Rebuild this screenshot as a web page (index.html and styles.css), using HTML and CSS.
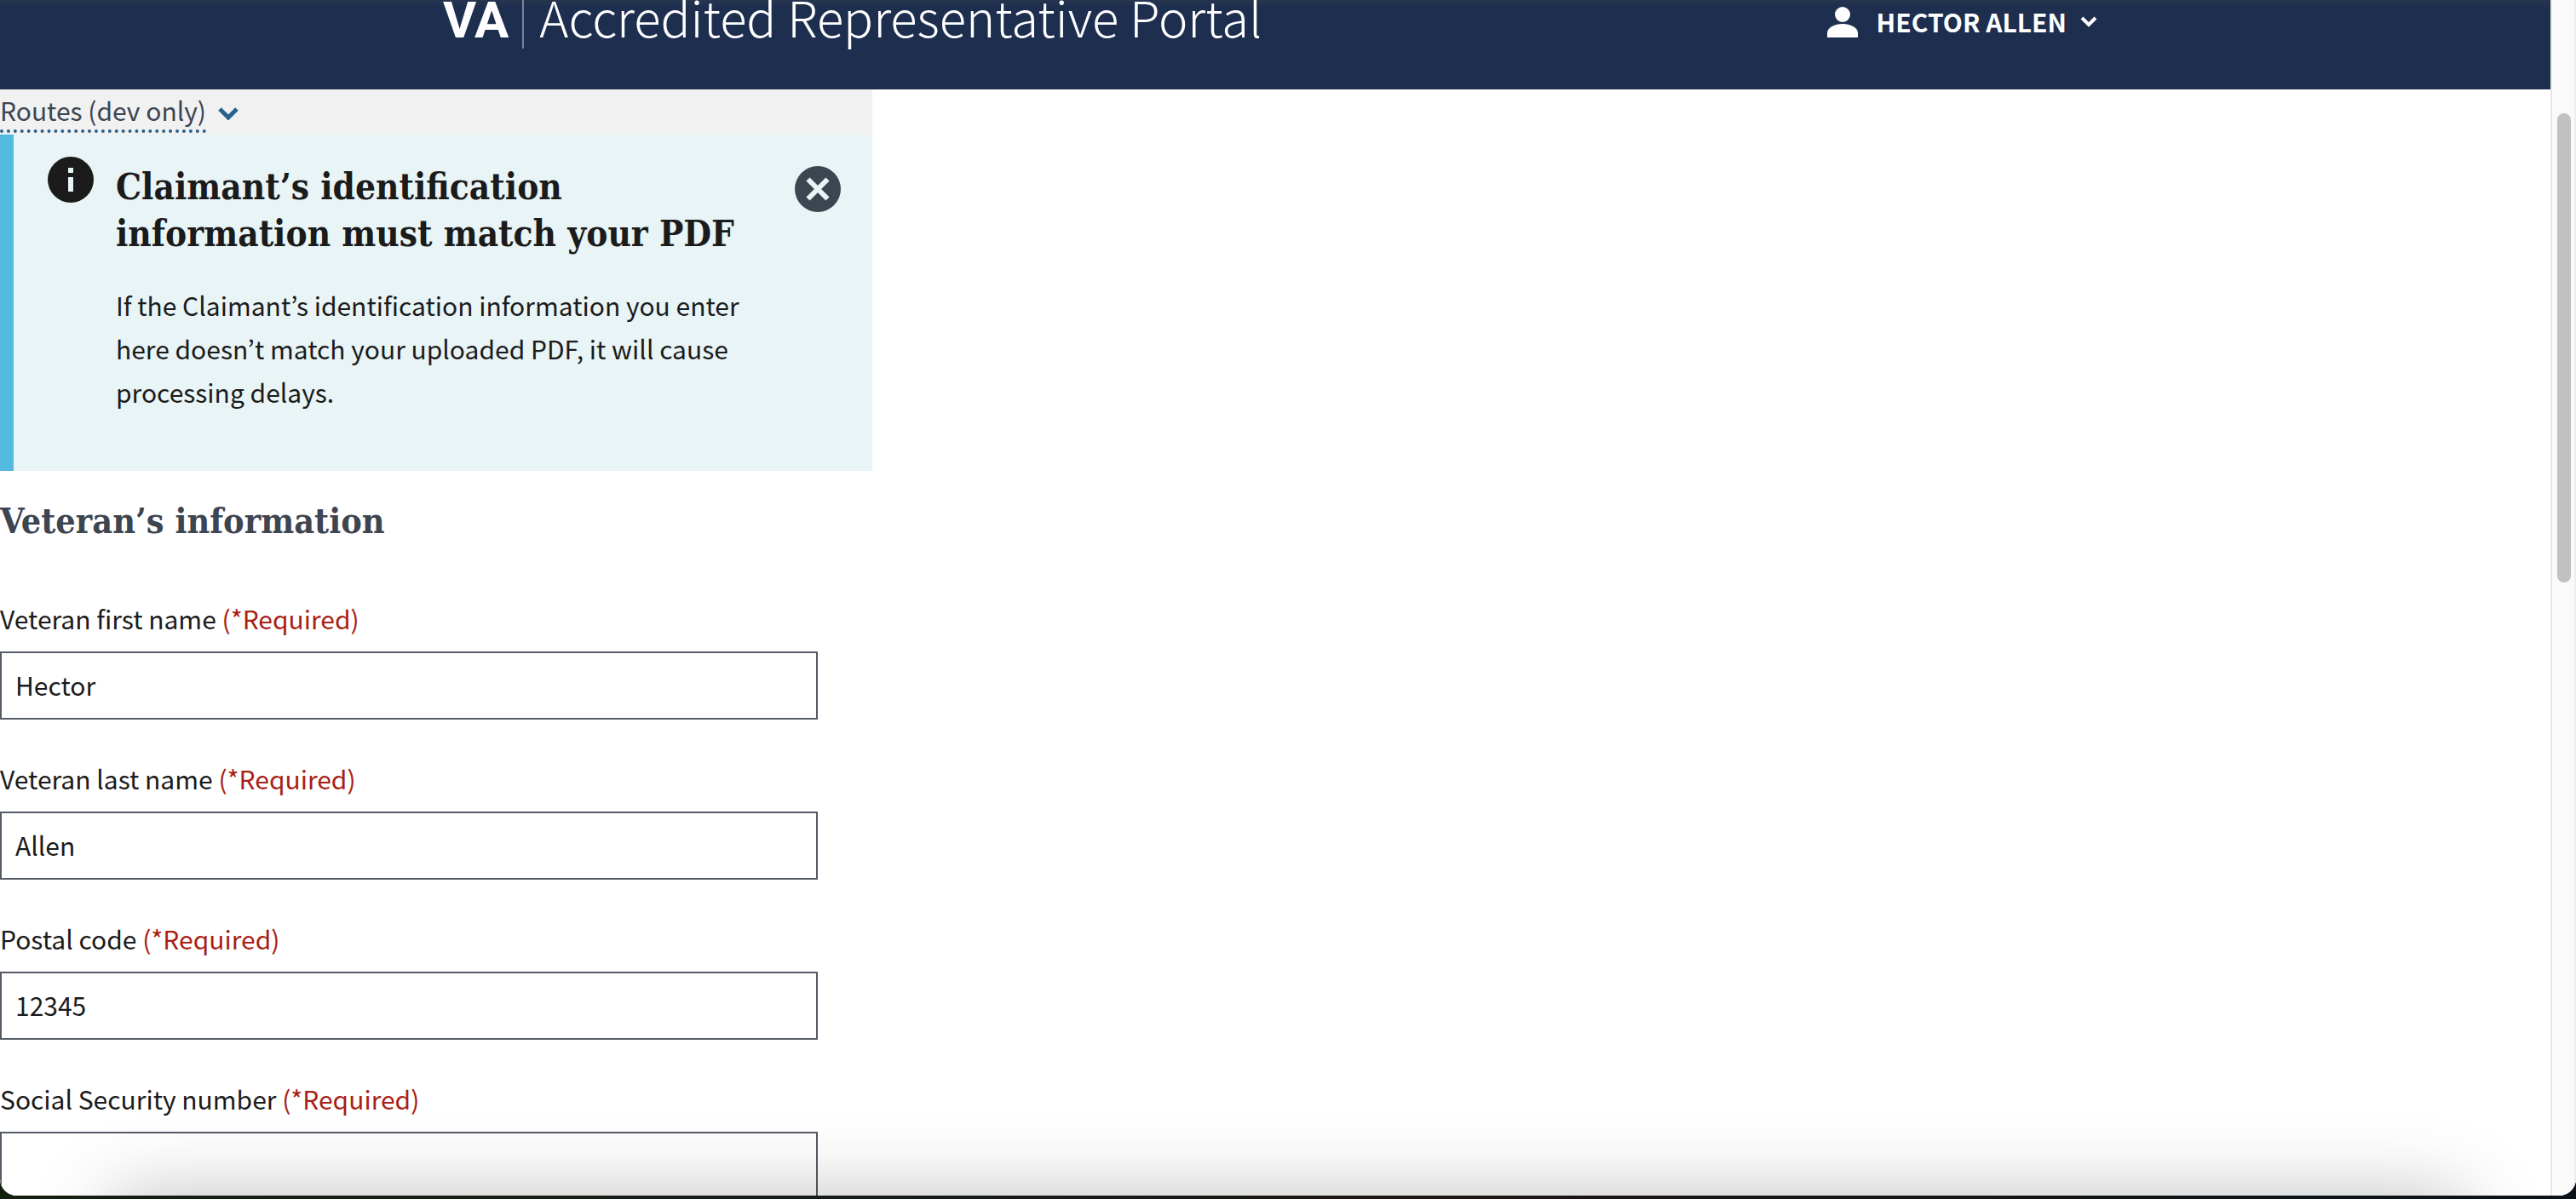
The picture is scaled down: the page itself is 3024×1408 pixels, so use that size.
FILE: index.html
```html
<!DOCTYPE html>
<html lang="en">
<head>
<meta charset="utf-8">
<title>Accredited Representative Portal</title>
<link rel="stylesheet" href="styles.css">
</head>
<body>
<div class="window">
  <div class="page">
    <header class="site-header">
      <a class="brand" href="#"><span class="brand-mark">VA</span><span class="brand-name">Accredited Representative Portal</span></a>
      <button class="account" type="button">
        <svg class="account-icon" viewBox="0 0 36 36" aria-hidden="true"><circle cx="18" cy="9" r="9"/><path d="M0 36v-5c0-7 9-11 18-11s18 4 18 11v5z"/></svg>
        <span>HECTOR ALLEN</span>
        <svg class="account-chevron" viewBox="0 0 20 13" aria-hidden="true"><path d="M2 2l8 8 8-8"/></svg>
      </button>
    </header>
    <main class="content">
      <div class="routes">
        <button class="routes-toggle" type="button">
          <span class="routes-label">Routes (dev only)</span>
          <svg class="routes-chevron" viewBox="0 0 24 15" aria-hidden="true"><path d="M2 2l10 10 10-10"/></svg>
        </button>
      </div>
      <section class="alert">
        <svg class="alert-icon" viewBox="0 0 54 54" aria-hidden="true"><circle cx="27" cy="27" r="27"/><path class="cutout" d="M24 13h6v6h-6zM24 24h6v17h-6z"/></svg>
        <div class="alert-body">
          <h2 class="alert-title">Claimant’s identification<br>information must match your PDF</h2>
          <p class="alert-text">If the Claimant’s identification information you enter<br>here doesn’t match your uploaded PDF, it will cause<br>processing delays.</p>
        </div>
        <button class="alert-close" type="button" aria-label="Close notification">
          <svg viewBox="0 0 54 54" aria-hidden="true"><circle cx="27" cy="27" r="27"/><path d="M15.500 15.500l23 23M38.500 15.500l-23 23"/></svg>
        </button>
      </section>
      <form class="form">
        <h3 class="form-title">Veteran’s information</h3>
        <div class="field">
          <label for="first">Veteran first name <span class="required">(*Required)</span></label>
          <input id="first" type="text" value="Hector">
        </div>
        <div class="field">
          <label for="last">Veteran last name <span class="required">(*Required)</span></label>
          <input id="last" type="text" value="Allen">
        </div>
        <div class="field">
          <label for="postal">Postal code <span class="required">(*Required)</span></label>
          <input id="postal" type="text" value="12345">
        </div>
        <div class="field">
          <label for="ssn">Social Security number <span class="required">(*Required)</span></label>
          <input id="ssn" type="text">
        </div>
      </form>
    </main>
  </div>
  <div class="scroll-track"><div class="scroll-thumb"></div></div>
  <div class="edge-shade"></div>
</div>
</body>
</html>
```
FILE: styles.css
```css
* { box-sizing: border-box; }

body {
  margin: 0;
  background: linear-gradient(90deg, #12200f, #141c18 35%, #1f1512 55%, #101416 80%, #0b131a);
  color: #1b1b1b;
  font-family: "Noto Sans CJK JP", "Noto Sans", sans-serif;
  font-size: 30px;
  line-height: 51px;
}

button, input { font: inherit; color: inherit; }
button { margin: 0; padding: 0; border: 0; background: none; cursor: pointer; }

.window {
  position: relative;
  display: grid;
  grid-template-columns: minmax(0, 1fr) 30px;
  height: calc(100vh - 4px);
  overflow: hidden;
  border-radius: 0 0 20px 20px;
  background: #fff;
}

.page { min-width: 0; }

.site-header {
  display: flex;
  justify-content: space-between;
  align-items: flex-start;
  height: 105px;
  padding: 0 532px 0 520px;
  background: linear-gradient(#26364f, #1e2e4f 8px);
  color: #fff;
}

.brand {
  display: flex;
  color: inherit;
  text-decoration: none;
  white-space: nowrap;
}
.brand-mark {
  height: 57px;
  padding-right: 16px;
  border-right: 2px solid #79839a;
  font-family: Roboto, sans-serif;
  font-size: 60px;
  font-weight: 700;
  line-height: 48px;
}
.brand-name { padding-left: 18px; font-size: 58px; font-weight: 300; line-height: 38px; }

.account { display: flex; align-items: center; font-weight: 700; white-space: nowrap; }
.account-icon { width: 36px; height: 36px; margin-right: 22px; fill: #fff; }
.account-chevron { width: 20px; height: 13px; margin-left: 16px; fill: none; stroke: #fff; stroke-width: 4; }

.content { width: 1024px; max-width: 100%; }

.routes { display: flex; height: 53px; background: #f1f1f1; color: #3d4551; }
.routes-toggle { display: flex; align-items: center; gap: 14px; }
.routes-label { height: 49px; border-bottom: 4px dotted #28628c; line-height: 45px; }
.routes-chevron { width: 24px; height: 15px; margin-top: 4px; fill: none; stroke: #28628c; stroke-width: 5; }

.alert {
  display: flex;
  align-items: flex-start;
  min-height: 395px;
  padding: 26px 37px 32px 40px;
  border-left: 16px solid #54b9de;
  background: #e8f4f6;
}
.alert-icon { flex: none; width: 54px; height: 54px; fill: #1b1b1b; }
.alert-icon .cutout { fill: #e8f4f6; }
.alert-body { flex: 1; padding: 8px 0 0 26px; white-space: nowrap; }
.alert-title {
  margin: 0 0 31px;
  font: 700 42px/55px "DejaVu Serif Condensed", "DejaVu Serif", serif;
}
.alert-text { margin: 0; }
.alert-close { width: 54px; height: 54px; margin-top: 11px; }
.alert-close svg { display: block; fill: #3d4551; stroke: #e8f4f6; stroke-width: 6; }
.alert-close circle { stroke: none; }

.form-title {
  margin: 32px 0 61px;
  color: #3d4551;
  font: 700 41px/55px "DejaVu Serif Condensed", "DejaVu Serif", serif;
}
.field { display: flex; flex-direction: column; gap: 13px; margin-bottom: 44px; }
.required { color: #a91f16; }
.field input {
  width: 960px;
  max-width: 100%;
  height: 80px;
  padding: 0 16px 2px;
  border: 2px solid #565c65;
  border-radius: 0;
  background: #fff;
}

.scroll-track {
  padding: 133px 4px 0 6px;
  border: solid #e6e6e6;
  border-width: 0 2px;
  border-right-color: #eee;
  background: #fafafa;
}
.scroll-thumb { height: 551px; border-radius: 8px; background: #c1c1c1; }

/* Soft shade rising from under the bottom edge of the window */
.edge-shade {
  position: absolute;
  top: 100%;
  left: 130px;
  right: 130px;
  height: 200px;
  box-shadow: 0 0 90px rgba(0, 0, 0, .25);
  pointer-events: none;
}
```
